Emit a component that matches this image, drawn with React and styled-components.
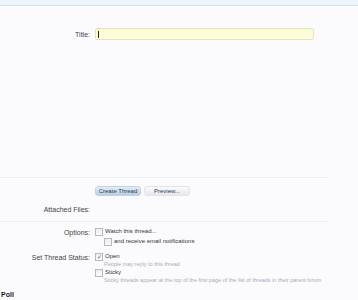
import styled, { createGlobalStyle } from "styled-components";

const Global = createGlobalStyle`
  body {
    margin: 0;
    background: #fbfbfe;
    font-family: "Liberation Sans", Arial, sans-serif;
    color: #333;
  }
`

const Page = styled.div`
  width: 358px;
  height: 300px;
  overflow: hidden;
  background: #fbfbfe;
`
const TopBar = styled.div`
  height: 5px;
  background: #eef4fb;
  border-bottom: 1px solid #d3e0ee;
`
const Row = styled.div`
  display: grid;
  grid-template-columns: 90px 1fr;
  column-gap: 5px;
  align-items: ${p => p.$align || 'start'};
  margin-top: ${p => p.$mt || 0}px;
`
const Label = styled.div`
  text-align: right;
  font-size: 7px;
  color: #444;
  line-height: 9px;
  padding-top: ${p => p.$pt || 0}px;
`
const TitleInput = styled.div`
  width: 215px;
  height: 10px;
  background: linear-gradient(#fbfbd0, #ffffe0);
  border: 1px solid #e2e4c4;
  border-radius: 2px;
  display: flex;
  align-items: center;
  padding-left: 2px;
`
const Caret = styled.span`
  width: 1px;
  height: 7px;
  background: #222;
`
const Divider = styled.div`
  width: 328px;
  height: 1px;
  background: #eef0f6;
  margin-top: ${p => p.$mt}px;
`
const Buttons = styled.div`
  display: flex;
  gap: 3px;
`
const Button = styled.div`
  width: 46px;
  height: 10px;
  border-radius: 3px;
  font-size: 6px;
  line-height: 9px;
  text-align: center;
  color: #2b3d52;
  background: ${p => p.$primary ? 'linear-gradient(#e3edf6, #b9cfe3)' : 'linear-gradient(#fbfbfd, #e6e8ee)'};
  border: 1px solid ${p => p.$primary ? '#c2d3e4' : '#e2e4ea'};
  box-sizing: border-box;
`
const Options = styled.div`
  display: flex;
  flex-direction: column;
`
const Check = styled.div`
  display: flex;
  align-items: center;
  gap: 2px;
  margin-left: ${p => p.$indent ? 9 : 0}px;
  margin-top: ${p => p.$mt || 0}px;
  font-size: 6px;
  line-height: 9px;
  color: #333;
`
const Box = styled.span`
  width: 6px;
  height: 6px;
  border: 1px solid #b8b8c0;
  background: linear-gradient(#eeeeee, #fafafa);
  flex: none;
  font-size: 6px;
  line-height: 6px;
  color: #555;
  text-align: center;
`
const Hint = styled.div`
  font-size: 5.5px;
  line-height: 6px;
  color: #aab;
  margin-left: 9px;
  margin-bottom: ${p => p.$mb || 0}px;
`
const Poll = styled.div`
  font-size: 7px;
  line-height: 8px;
  font-weight: bold;
  color: #222;
  margin: 8px 0 0 1px;
`

export default function App() {
  return (
    <Page>
      <Global />
      <TopBar />
      <Row $align="center" $mt={22}>
        <Label>Title:</Label>
        <TitleInput><Caret /></TitleInput>
      </Row>
      <Divider $mt={137} />
      <Row $mt={8}>
        <div />
        <Buttons>
          <Button $primary>Create Thread</Button>
          <Button>Preview...</Button>
        </Buttons>
      </Row>
      <Row $mt={9}>
        <Label>Attached Files:</Label>
        <div />
      </Row>
      <Divider $mt={7} />
      <Row $mt={5}>
        <Label $pt={1}>Options:</Label>
        <Options>
          <Check><Box />Watch this thread...</Check>
          <Check $indent $mt={1}><Box />and receive email notifications</Check>
        </Options>
      </Row>
      <Row $mt={6}>
        <Label $pt={1}>Set Thread Status:</Label>
        <Options>
          <Check><Box>✓</Box>Open</Check>
          <Hint $mb={1}>People may reply to this thread</Hint>
          <Check><Box />Sticky</Check>
          <Hint>Sticky threads appear at the top of the first page of the list of threads in their parent forum</Hint>
        </Options>
      </Row>
      <Poll>Poll</Poll>
    </Page>
  )
}
